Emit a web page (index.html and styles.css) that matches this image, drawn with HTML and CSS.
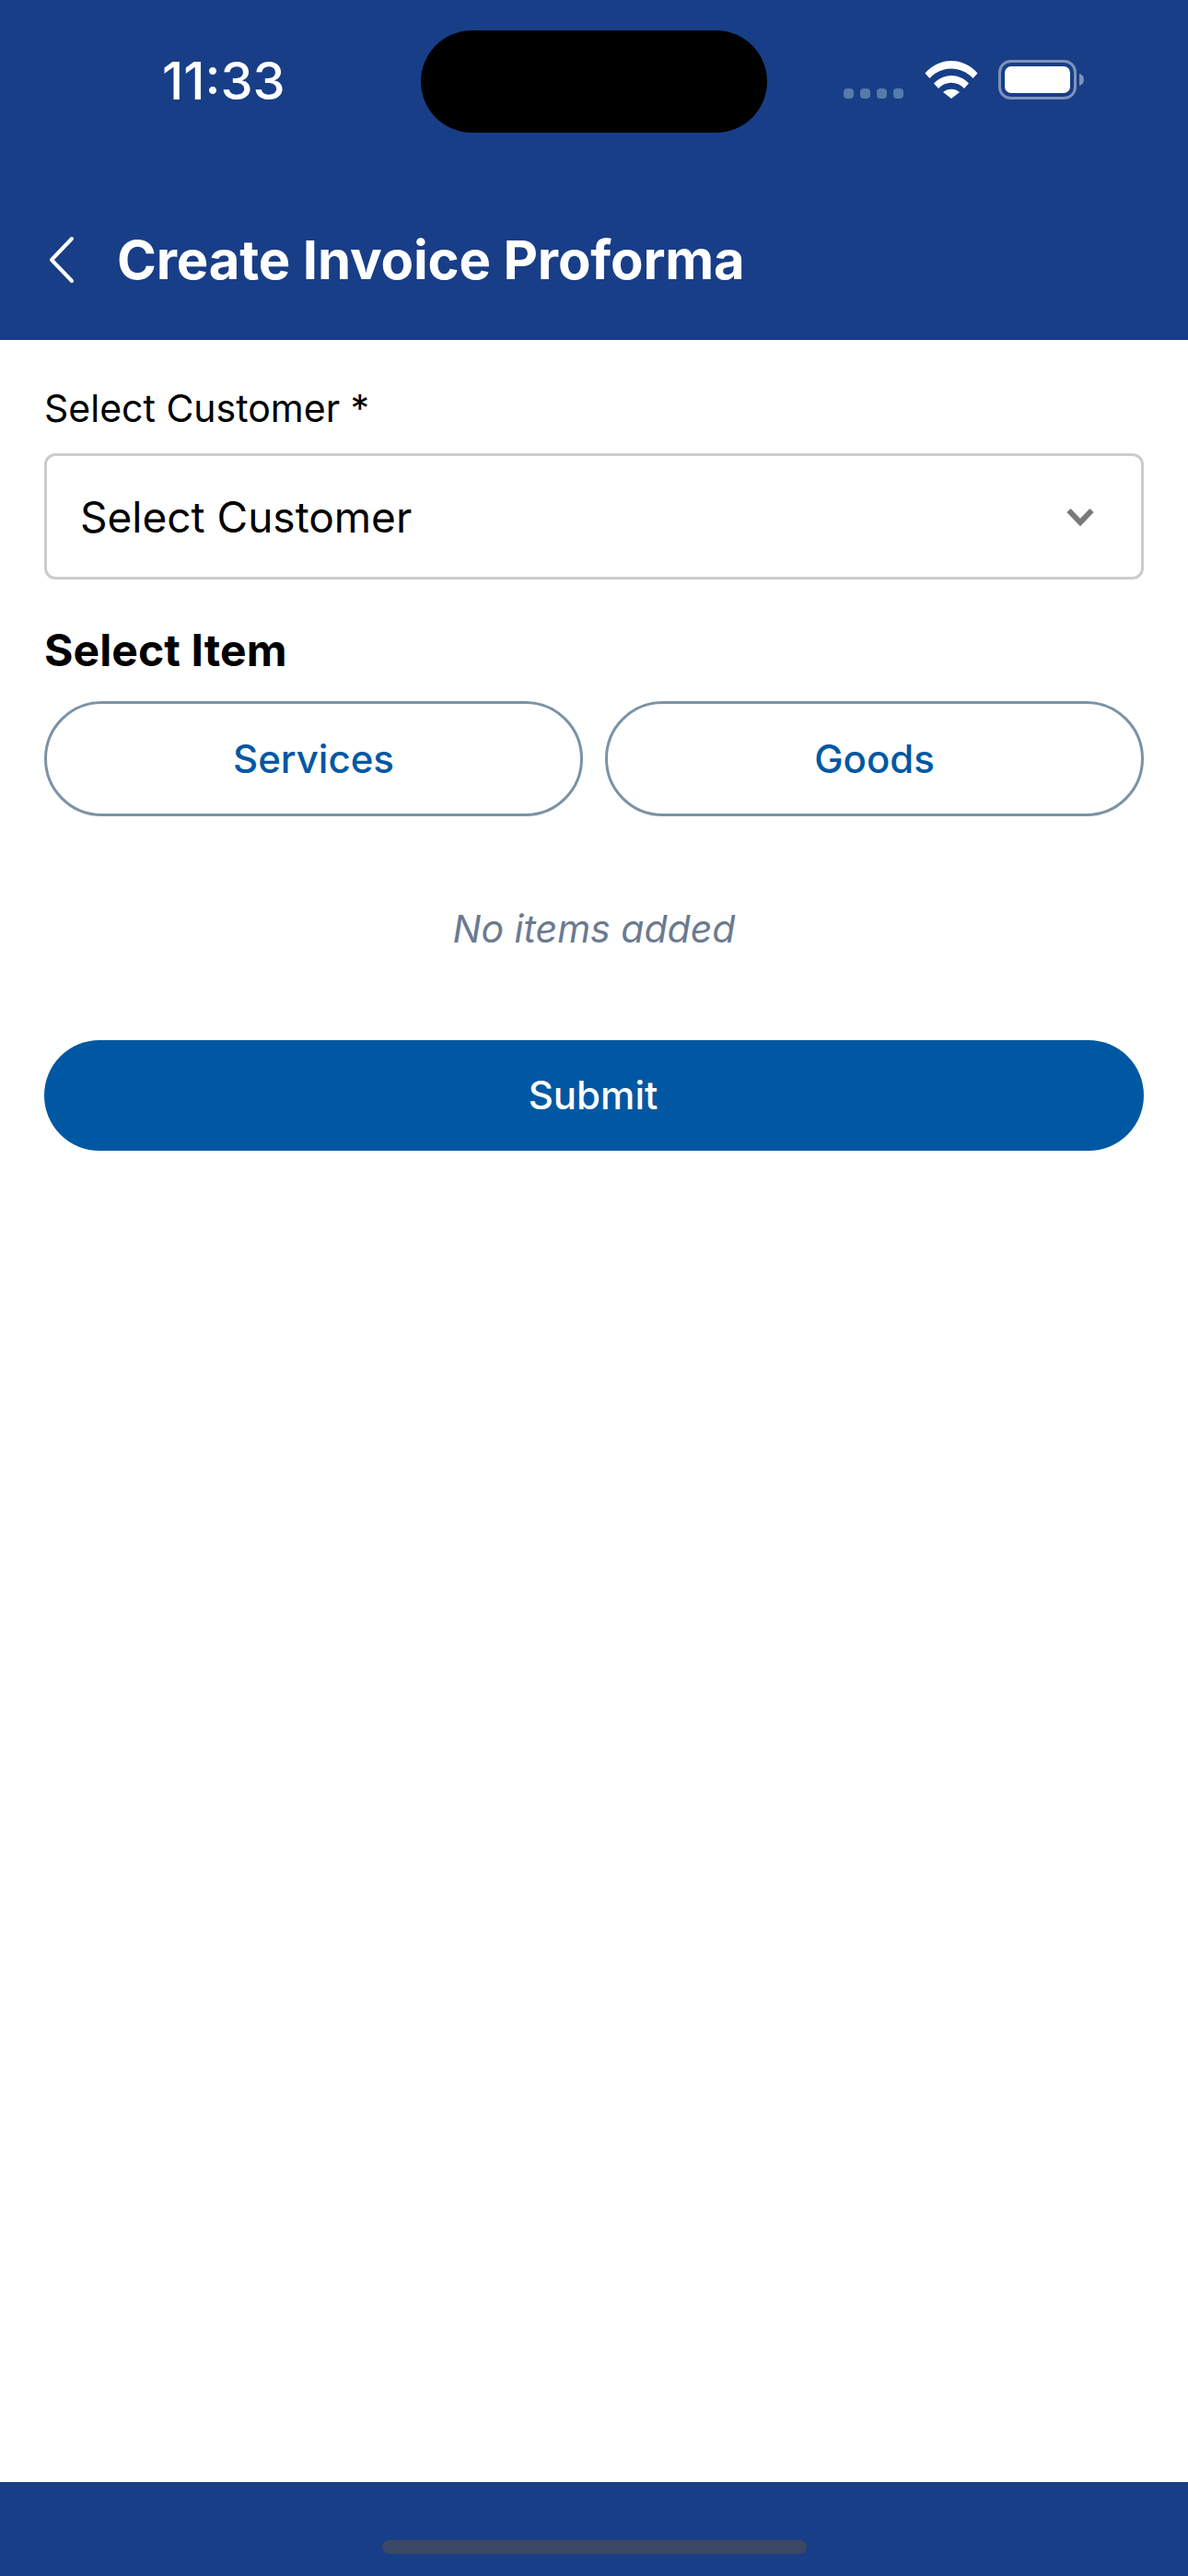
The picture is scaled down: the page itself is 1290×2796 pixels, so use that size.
FILE: index.html
```html
<!DOCTYPE html>
<html lang="en">
<head>
<meta charset="utf-8">
<title>Create Invoice Proforma</title>
<link rel="stylesheet" href="styles.css">
</head>
<body>
<div class="screen">
  <header class="header">
    <div class="status">
      <span class="time">11:33</span>
      <div class="island"></div>
      <div class="status-icons">
        <div class="signal"><i></i><i></i><i></i><i></i></div>
        <svg class="wifi" width="58" height="42" viewBox="0 0 58 42">
          <path d="M0.5 14.5 C16 -3.5 42 -3.5 57.5 14.5 L52.5 20 C39.5 6 18.5 6 5.5 20 Z" fill="#fff"/>
          <path d="M10 25.5 C20.5 14 37.5 14 48 25.5 L43 31 C35 22.5 23 22.5 15 31 Z" fill="#fff"/>
          <path d="M20 35 C25 30.5 33 30.5 38 35 L29 42 Z" fill="#fff"/>
        </svg>
        <svg class="battery" width="94" height="43" viewBox="0 0 94 43">
          <rect x="1.5" y="1.5" width="82" height="40" rx="12" fill="none" stroke="#7c93bb" stroke-width="3"/>
          <rect x="7" y="7" width="71" height="29" rx="7" fill="#fff"/>
          <path d="M88 15 C91.5 16 93 18.5 93 21.5 C93 24.5 91.5 27 88 28 Z" fill="#7c93bb"/>
        </svg>
      </div>
    </div>
    <div class="nav">
      <svg class="back" width="30" height="52" viewBox="0 0 30 52">
        <path d="M25 3 L3 26 L25 49" fill="none" stroke="#fff" stroke-width="4" stroke-linecap="round" stroke-linejoin="round"/>
      </svg>
      <h1 class="title">Create Invoice Proforma</h1>
    </div>
  </header>

  <main class="content">
    <label class="field-label">Select Customer *</label>
    <div class="select">
      <span>Select Customer</span>
      <svg class="caret" width="30" height="20" viewBox="0 0 30 20">
        <path d="M2.5 3 L15 16 L27.5 3" fill="none" stroke="#7a7a7a" stroke-width="6"/>
      </svg>
    </div>
    <h2 class="section-title">Select Item</h2>
    <div class="choices">
      <button class="choice">Services</button>
      <button class="choice">Goods</button>
    </div>
    <p class="empty">No items added</p>
    <button class="submit">Submit</button>
  </main>

  <footer class="footer"><div class="home-bar"></div></footer>
</div>
</body>
</html>
```
FILE: styles.css
```css
* { box-sizing: border-box; }
html, body { margin: 0; padding: 0; }
body { font-family: Inter, "Noto Sans", sans-serif; background: #fff; color: #000; }
.screen { width: 1290px; height: 2796px; display: flex; flex-direction: column; background: #fff; }

.header { height: 369px; background: #183e87; color: #fff; flex: none; position: relative; }
.status { height: 220px; padding: 63px 0 0 176px; display: flex; align-items: flex-start; }
.time { font-size: 56px; line-height: 50px; font-weight: 500; letter-spacing: 0; }
.island { position: absolute; left: 457px; top: 33px; width: 376px; height: 111px; border-radius: 56px; background: #000; }
.status-icons { position: absolute; left: 916px; top: 65px; display: flex; align-items: flex-end; }
.signal { display: flex; gap: 7px; width: 88px; padding-bottom: 1px; }
.signal i { display: block; width: 11px; height: 11px; border-radius: 4px; background: #567aab; }
.wifi { margin-right: 22px; margin-bottom: 1px; }
.nav { display: flex; align-items: center; padding-left: 53px; height: 60px; margin-top: 32px; gap: 44px; }
.back { flex: none; }
.title { margin: 0; font-size: 58px; line-height: 60px; font-weight: 700; letter-spacing: -0.15px; white-space: nowrap; }

.content { flex: 1; padding: 0 48px; display: flex; flex-direction: column; }
.field-label { margin-top: 49px; font-size: 41px; line-height: 50px; }
.select { margin-top: 24px; height: 137px; border: 3px solid #ccc; border-radius: 12px; padding: 0 51px 0 36px; display: flex; align-items: center; justify-content: space-between; font-size: 46px; }
.section-title { margin: 49px 0 0; font-size: 48px; line-height: 56px; font-weight: 700; letter-spacing: 0.1px; }
.choices { margin-top: 27px; display: flex; gap: 24px; }
.choice { flex: 1; height: 125px; border: 3px solid #7b93a5; border-radius: 63px; background: #fff; color: #0058a3; font: 500 42px/1 Inter, sans-serif; padding: 0; }
.empty { margin: 97px 0 0; text-align: center; font-size: 41px; line-height: 50px; font-style: italic; color: #6b7a90; }
.submit { margin-top: 96px; height: 120px; border: 0; border-radius: 60px; background: #0058a3; color: #fff; font: 500 42px/1 Inter, sans-serif; padding: 0 2px 0 0; }

.footer { height: 102px; background: #183e87; flex: none; padding-top: 63px; display: flex; justify-content: center; }
.home-bar { width: 461px; height: 15px; border-radius: 8px; background: #3a4864; }
```
